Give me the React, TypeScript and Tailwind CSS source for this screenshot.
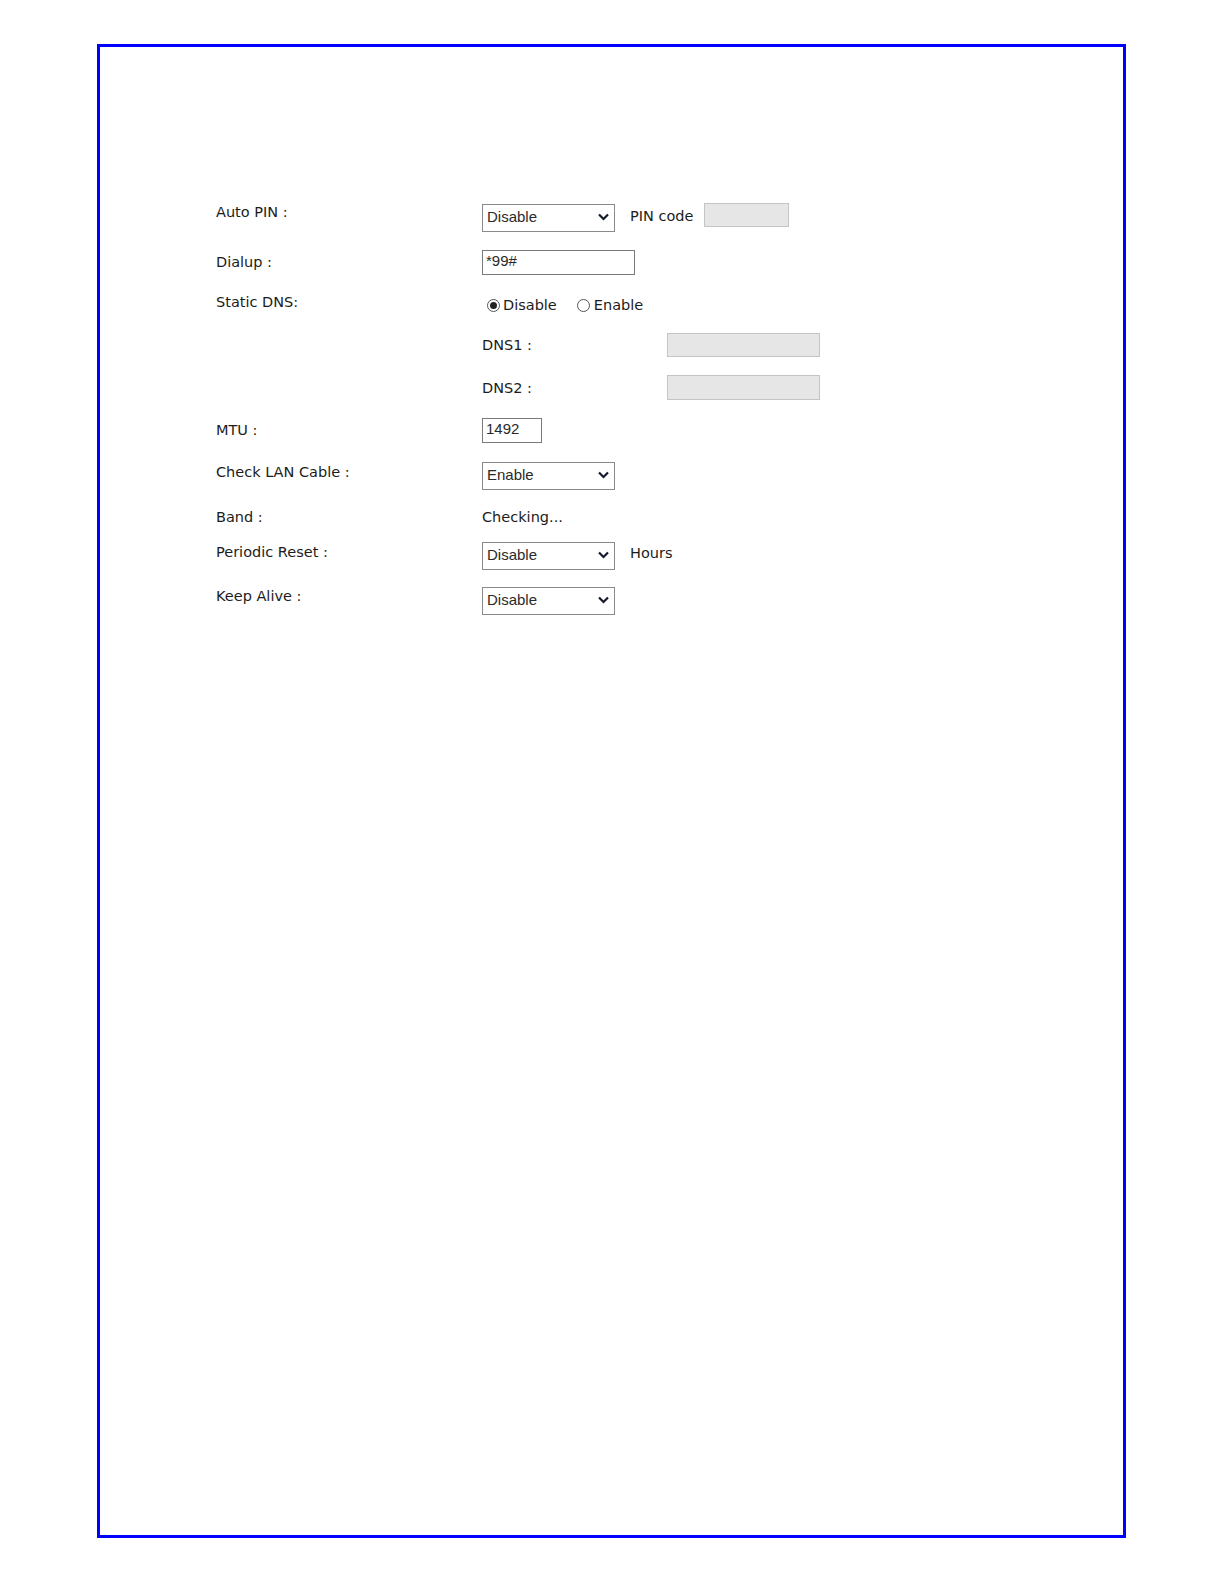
import React from 'react';

const labelFont = { fontFamily: '"DejaVu Sans", Verdana, sans-serif' };
const fieldFont = { fontFamily: '"Liberation Sans", Arial, sans-serif' };

function Chevron() {
  return (
    <svg width="11" height="8" viewBox="0 0 11 8" className="mt-[4px] shrink-0">
      <path d="M1 1.5 L5.5 6 L10 1.5" fill="none" stroke="#151a2a" strokeWidth="2.2" />
    </svg>
  );
}

function Select({ value }: { value: string }) {
  return (
    <div
      className="flex h-[28px] w-[133px] items-start justify-between border border-[#8a8a8a] bg-white pt-[4px] pl-[4px] pr-[5px] text-[15px] leading-[15px] text-[#2a2a2a]"
      style={fieldFont}
    >
      <span>{value}</span>
      <Chevron />
    </div>
  );
}

function TextBox({ value, w }: { value: string; w: string }) {
  return (
    <div
      className={`${w} h-[25px] border border-[#7a7a7a] bg-white pt-[2px] pl-[3px] text-[15px] leading-[15px] text-[#2a2a2a]`}
      style={fieldFont}
    >
      {value}
    </div>
  );
}

function Disabled({ w, h }: { w: string; h: string }) {
  return <div className={`${w} ${h} border border-[#c4c4c4] bg-[#e6e6e6]`} />;
}

function Radio({ checked }: { checked?: boolean }) {
  return (
    <span className="flex h-[13px] w-[13px] items-center justify-center rounded-full border border-[#555] bg-white">
      {checked && <span className="h-[7px] w-[7px] rounded-full bg-[#222]" />}
    </span>
  );
}

export default function App() {
  return (
    <div className="min-h-[1585px] bg-white pt-[44px] pl-[97px]">
      <div
        className="h-[1494px] w-[1029px] border-[3px] border-[#0000ff] pt-[156px] pl-[116px] text-[14.5px] leading-[17px] text-[#1c1c1c]"
        style={labelFont}
      >
        {/* Auto PIN */}
        <div className="flex items-start">
          <div className="w-[266px] pt-[1px]">Auto PIN :</div>
          <div className="flex items-start">
            <div className="mt-[1px]">
              <Select value="Disable" />
            </div>
            <span className="ml-[15px] mt-[5px]">PIN code</span>
            <div className="ml-[11px]">
              <Disabled w="w-[85px]" h="h-[24px]" />
            </div>
          </div>
        </div>

        {/* Dialup */}
        <div className="mt-[18px] flex items-start">
          <div className="w-[266px] pt-[4px]">Dialup :</div>
          <TextBox value="*99#" w="w-[153px]" />
        </div>

        {/* Static DNS */}
        <div className="mt-[19px] flex items-start">
          <div className="w-[266px]">Static DNS:</div>
          <div className="flex items-center pt-[3px]">
            <span className="ml-[5px]">
              <Radio checked />
            </span>
            <span className="ml-[3px]">Disable</span>
            <span className="ml-[20px]">
              <Radio />
            </span>
            <span className="ml-[4px]">Enable</span>
          </div>
        </div>

        {/* DNS1 */}
        <div className="mt-[19px] flex items-start">
          <div className="w-[266px]" />
          <div className="w-[185px] pt-[4px]">DNS1 :</div>
          <Disabled w="w-[153px]" h="h-[24px]" />
        </div>

        {/* DNS2 */}
        <div className="mt-[18px] flex items-start">
          <div className="w-[266px]" />
          <div className="w-[185px] pt-[5px]">DNS2 :</div>
          <Disabled w="w-[153px]" h="h-[25px]" />
        </div>

        {/* MTU */}
        <div className="mt-[18px] flex items-start">
          <div className="w-[266px] pt-[4px]">MTU :</div>
          <TextBox value="1492" w="w-[60px]" />
        </div>

        {/* Check LAN Cable */}
        <div className="mt-[19px] flex items-start">
          <div className="w-[266px] pt-[2px]">Check LAN Cable :</div>
          <Select value="Enable" />
        </div>

        {/* Band */}
        <div className="mt-[19px] flex items-start">
          <div className="w-[266px]">Band :</div>
          <div>Checking...</div>
        </div>

        {/* Periodic Reset */}
        <div className="mt-[16px] flex items-start">
          <div className="w-[266px] pt-[2px]">Periodic Reset :</div>
          <Select value="Disable" />
          <span className="ml-[15px] mt-[3px]">Hours</span>
        </div>

        {/* Keep Alive */}
        <div className="mt-[17px] flex items-start">
          <div className="w-[266px] pt-[1px]">Keep Alive :</div>
          <Select value="Disable" />
        </div>
      </div>
    </div>
  );
}
